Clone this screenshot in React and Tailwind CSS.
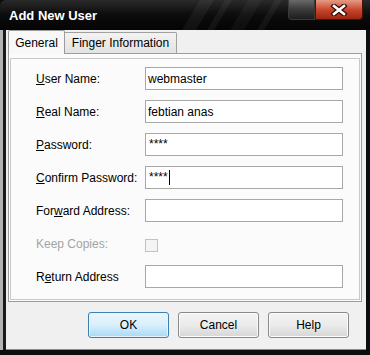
import React from "react";

function Input({ children }) {
  return (
    <div className="w-[198px] h-[23px] border border-[#a8a8a8] bg-white pl-[2px] flex items-center text-[12px] text-black leading-none">
      {children}
    </div>
  );
}

function Row({ label, children, disabled }) {
  return (
    <div className="flex items-center h-[23px]">
      <div className={"w-[109px] text-[12px] leading-none " + (disabled ? "text-[#a3a3a3]" : "text-black")}>{label}</div>
      {children}
    </div>
  );
}

function Stars({ cursor }) {
  return (
    <span className="flex items-center">
      <span className="text-[12px] leading-none -mt-[1px] pl-px">****</span>
      {cursor && <span className="inline-block w-px h-[15px] bg-black ml-[1px]" />}
    </span>
  );
}

function Btn({ children, primary }) {
  return (
    <div
      className={
        "w-[81px] h-[26px] rounded-[3px] border flex items-center justify-center text-[12px] text-black " +
        (primary
          ? "border-[#3c7fb1] bg-gradient-to-b from-[#eaf6fd] via-[#d9f0fc] to-[#a7d9f5] shadow-[inset_0_0_0_1px_#e6f4fc]"
          : "border-[#8a8a8a] bg-gradient-to-b from-[#f4f4f4] via-[#ebebeb] to-[#d6d6d6] shadow-[inset_0_0_0_1px_#fbfbfb]")
      }
    >
      {children}
    </div>
  );
}

export default function App() {
  return (
    <div className="w-[370px] h-[355px] bg-[#0d0d0d] flex flex-col font-['Liberation_Sans',Arial,sans-serif] overflow-hidden">
      {/* Title bar */}
      <div className="relative h-[30px] flex items-start bg-gradient-to-b from-[#2a2a2a] via-[#0c0c0c] to-[#050505] rounded-tl-[6px]">
        <svg className="absolute left-0 top-0" width="370" height="30" viewBox="0 0 370 30">
          <polygon points="200,0 214,0 196,30 182,30" fill="#ffffff" opacity="0.05" />
          <polygon points="225,0 232,0 214,30 207,30" fill="#ffffff" opacity="0.05" />
          <polygon points="248,0 262,0 244,30 230,30" fill="#ffffff" opacity="0.04" />
          <polygon points="275,0 282,0 264,30 257,30" fill="#ffffff" opacity="0.05" />
        </svg>
        <div className="relative pl-[9px] pt-[9px] text-[13px] font-bold text-white leading-none">Add New User</div>
        <div className="relative ml-auto mr-[7px] flex">
          <div className="w-[27px] h-[20px] border border-[#3a3a3a] border-t-0 rounded-bl-[4px] bg-gradient-to-b from-[#6a6a6a] via-[#3a3a3a] to-[#1e1e1e]" />
          <div className="w-[48px] h-[20px] border border-[#4a1208] border-t-0 rounded-br-[4px] bg-gradient-to-b from-[#e49a84] via-[#c9472e] to-[#9c2510] flex items-center justify-center">
            <svg width="18" height="12" viewBox="0 0 18 12">
              <path d="M4 2 L14 10 M14 2 L4 10" stroke="#3a0a02" strokeWidth="5" strokeLinecap="square" />
              <path d="M4 2 L14 10 M14 2 L4 10" stroke="#ffffff" strokeWidth="2.6" strokeLinecap="square" />
            </svg>
          </div>
        </div>
      </div>

      {/* Body */}
      <div className="flex">
        <div className="w-[3px] h-[320px] bg-[#b4b4b4]" />
        <div className="w-[3px] h-[320px] bg-[#1a1a1a]" />
        <div className="w-[360px] h-[320px] bg-[#f0f0f0] flex flex-col border-b border-[#8a8a8a]">
          {/* Tab strip */}
          <div className="h-[23px] flex items-end pl-[2px]">
            <div className="relative z-10 w-[57px] h-[24px] -mb-px border border-b-0 border-[#9c9c9c] bg-[#f8f8f8] flex items-center justify-center text-[12px] text-black rounded-t-[2px]">
              General
            </div>
            <div className="w-[112px] h-[21px] border border-b-0 border-l-0 border-[#a0a0a0] bg-gradient-to-b from-[#f3f3f3] to-[#e2e2e2] flex items-center justify-center text-[12px] text-black rounded-tr-[2px]">
              Finger Information
            </div>
          </div>
          {/* Panel */}
          <div className="ml-[2px] mr-[4px] h-[249px] border border-[#9c9c9c] bg-[#fbfbfb] pt-[4px] px-[1px]">
            <div className="h-[242px] border border-[#c9c9c9] pt-[8px] pl-[25px] flex flex-col gap-[10px]">
              <Row label={<><span className="underline">U</span>ser Name:</>}>
                <Input>webmaster</Input>
              </Row>
              <Row label={<><span className="underline">R</span>eal Name:</>}>
                <Input>febtian anas</Input>
              </Row>
              <Row label={<><span className="underline">P</span>assword:</>}>
                <Input><Stars /></Input>
              </Row>
              <Row label={<><span className="underline">C</span>onfirm Password:</>}>
                <Input><Stars cursor /></Input>
              </Row>
              <Row label={<>For<span className="underline">w</span>ard Address:</>}>
                <Input />
              </Row>
              <Row label="Keep Copies:" disabled>
                <div className="w-[13px] h-[13px] mt-[3px] border border-[#c2c2c2] bg-[#f4f4f4]" />
              </Row>
              <Row label={<>R<span className="underline">e</span>turn Address</>}>
                <Input />
              </Row>
            </div>
          </div>
          {/* Buttons */}
          <div className="flex justify-end gap-[9px] pr-[17px] pt-[10px]">
            <Btn primary>OK</Btn>
            <Btn>Cancel</Btn>
            <Btn>Help</Btn>
          </div>
        </div>
      </div>
    </div>
  );
}
